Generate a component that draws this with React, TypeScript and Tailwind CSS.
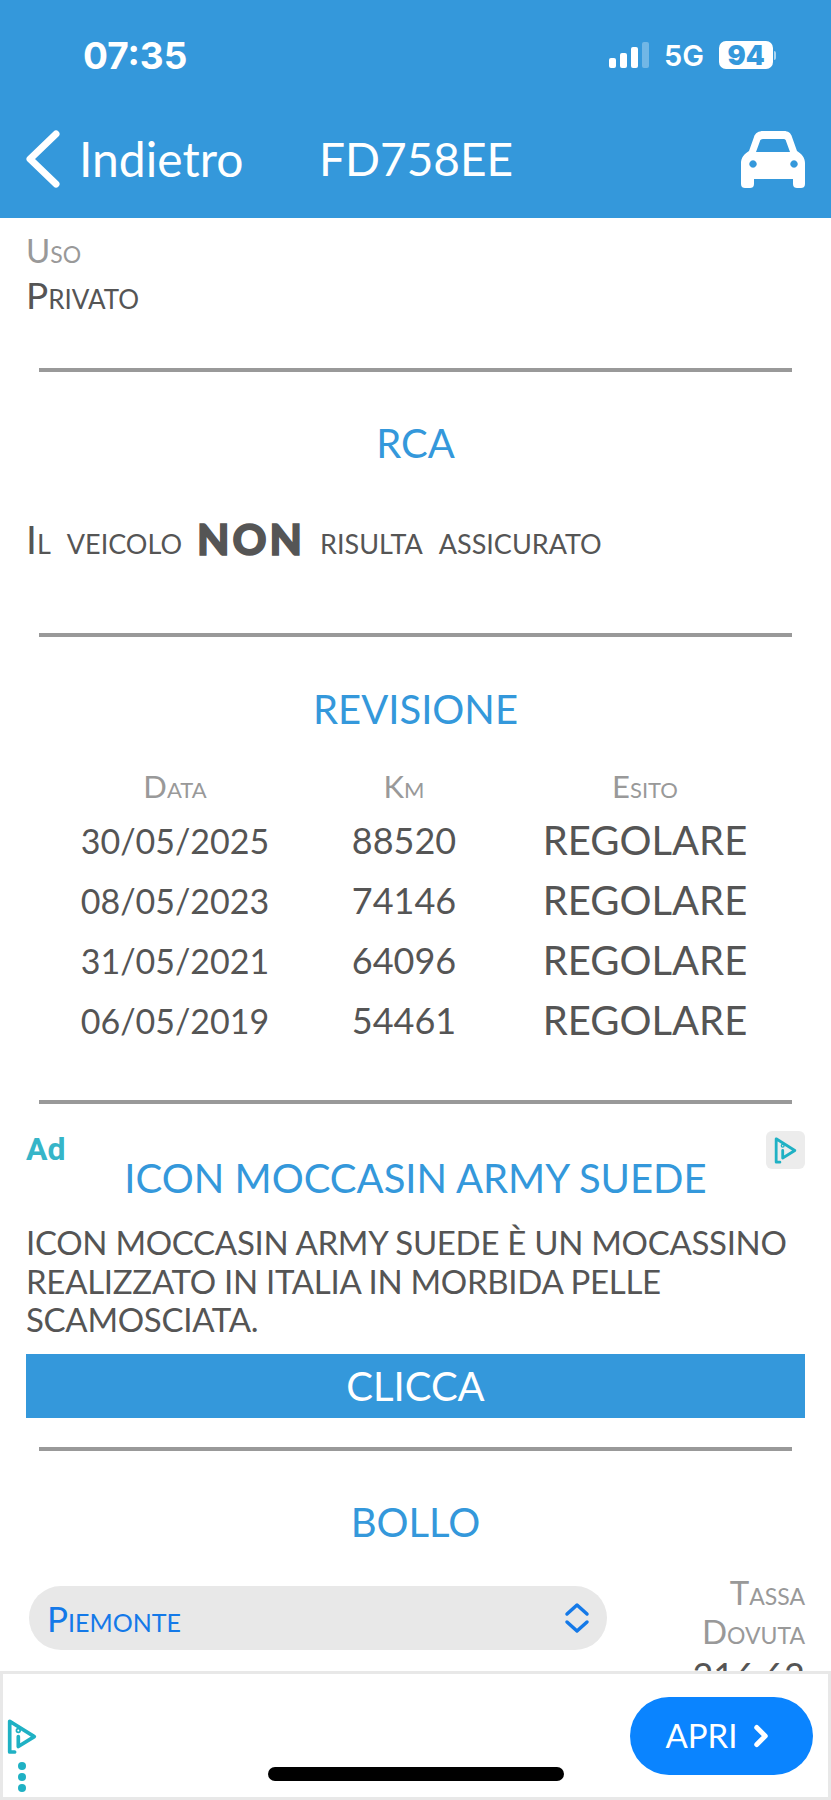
import React from 'react';
import { ChevronRight } from 'lucide-react';

const revisions = [
  { date: '30/05/2025', km: '88520', esito: 'REGOLARE' },
  { date: '08/05/2023', km: '74146', esito: 'REGOLARE' },
  { date: '31/05/2021', km: '64096', esito: 'REGOLARE' },
  { date: '06/05/2019', km: '54461', esito: 'REGOLARE' },
];

const Divider: React.FC = () => <div className="mx-[39px] h-1 bg-[#999999]" />;

const SectionTitle: React.FC<{ children: React.ReactNode }> = ({ children }) => (
  <h2 className="text-center text-[40px] leading-[44px] text-[#3498db]">{children}</h2>
);

const AdChoice: React.FC<{ className?: string }> = ({ className }) => (
  <svg viewBox="0 0 26 30" className={className} fill="none" stroke="#1fb1c4" strokeWidth="3" strokeLinejoin="round" strokeLinecap="round">
    <path d="M7 28H3V3l20 12.5-13 8v-8" />
    <circle cx="10" cy="10.5" r="0.7" />
  </svg>
);

const CarIcon: React.FC = () => (
  <svg viewBox="0 0 64 57" className="h-[57px] w-[64px]" fill="white">
    <path fillRule="evenodd" d="M22 0H43C47 0 50 2 51 6L56 20C61 23 64 27 64 32V53C64 56 62 57 60 57H56C54 57 52 56 52 53V48H13V53C13 56 11 57 9 57H4C2 57 0 56 0 53V32C0 27 3 23 8 20L13 6C14 2 18 0 22 0ZM22 8C20 8 19 9 19 10L15 21H49L45 10C45 9 44 8 43 8ZM12 29.3a3.7 3.7 0 1 0 0.01 0ZM53 29.3a3.7 3.7 0 1 0 0.01 0Z" />
  </svg>
);

const App: React.FC = () => {
  return (
    <div className="relative flex h-[1800px] w-[831px] flex-col overflow-hidden bg-white font-['Lato',sans-serif] text-[#555555]">
      <header className="h-[218px] shrink-0 bg-[#3498db] text-white">
        <div className="flex h-[110px] items-center justify-between pl-[83px] pr-[55px] font-['Inter',sans-serif]">
          <span className="text-[37px] font-bold leading-none">07:35</span>
          <div className="flex items-center">
            <div className="flex h-[26px] items-end gap-[4px]">
              <span className="h-[10px] w-[7px] rounded-[2px] bg-white" />
              <span className="h-[15px] w-[7px] rounded-[2px] bg-white" />
              <span className="h-[21px] w-[7px] rounded-[2px] bg-white" />
              <span className="h-[26px] w-[7px] rounded-[2px] bg-white/30" />
            </div>
            <span className="ml-[15px] text-[29px] font-semibold leading-none">5G</span>
            <span className="ml-[15px] flex h-[28px] w-[54px] items-center justify-center rounded-[7px] bg-white text-[27px] font-black leading-none text-[#3498db]">94</span>
            <span className="ml-[1px] h-[9px] w-[2px] rounded-r-full bg-white/60" />
          </div>
        </div>
        <nav className="flex items-center justify-between pl-[25px] pr-[26px] pt-[20px]">
          <div className="flex w-[294px] items-center">
            <svg viewBox="0 0 36 58" className="h-[58px] w-[36px] shrink-0" fill="none" stroke="white" strokeWidth="7" strokeLinecap="round" strokeLinejoin="round">
              <path d="M31 4 5 29l26 25" />
            </svg>
            <span className="ml-[18px] text-[48px] leading-none">Indietro</span>
          </div>
          <span className="flex-1 text-[46px] leading-none">FD758EE</span>
          <CarIcon />
        </nav>
      </header>

      <main className="relative min-h-0 flex-1 overflow-hidden">
        <div className="px-[26px] pt-[10px] [font-variant-caps:small-caps]">
          <div className="text-[33px] leading-[44px] text-[#999999]">Uso</div>
          <div className="text-[37px] leading-[46px]">Privato</div>
        </div>
        <div className="mt-[50px]"><Divider /></div>

        <div className="pt-[49px]"><SectionTitle>RCA</SectionTitle></div>
        <p className="mt-[51px] flex items-center px-[26px] text-[39px] leading-[46px] [font-variant-caps:small-caps] [word-spacing:6px]">
          Il veicolo
          <b className="mx-[15px] text-[42px] font-black tracking-[3px] [-webkit-text-stroke:1.5px_#555555]">NON</b>
          risulta assicurato
        </p>
        <div className="mt-[71px]"><Divider /></div>

        <div className="pt-[50px]"><SectionTitle>REVISIONE</SectionTitle></div>
        <table className="ml-[26px] mt-[32px] w-[780px] table-fixed text-center">
          <thead>
            <tr className="text-[31px] leading-[47px] text-[#999999] [font-variant-caps:small-caps]">
              <th className="w-[298px] font-normal">Data</th>
              <th className="w-[160px] font-normal">Km</th>
              <th className="font-normal">Esito</th>
            </tr>
          </thead>
          <tbody>
            {revisions.map((r) => (
              <tr key={r.date} className="h-[59.5px]">
                <td className="text-[34px]">{r.date}</td>
                <td className="text-[36px]">{r.km}</td>
                <td className="text-[40px]">{r.esito}</td>
              </tr>
            ))}
          </tbody>
        </table>
        <div className="mt-[50px]"><Divider /></div>

        <section className="relative px-[26px] pt-[52px]">
          <span className="absolute left-[26px] top-[29px] font-['Roboto',sans-serif] text-[32px] font-bold leading-none text-[#36b5c8]">Ad</span>
          <div className="absolute right-[26px] top-[27px] flex h-[38px] w-[39px] items-center justify-center rounded-[6px] bg-[#ececec]">
            <AdChoice className="h-[28px] w-[25px]" />
          </div>
          <SectionTitle>ICON MOCCASIN ARMY SUEDE</SectionTitle>
          <p className="mt-[23px] text-[33px] leading-[38.5px] tracking-[-0.3px]">
            ICON MOCCASIN ARMY SUEDE È UN MOCASSINO REALIZZATO IN ITALIA IN MORBIDA PELLE SCAMOSCIATA.
          </p>
          <button className="mt-[15px] h-[64px] w-full bg-[#3498db] text-[40px] text-white">CLICCA</button>
        </section>
        <div className="mt-[29px]"><Divider /></div>

        <div className="pt-[49px]"><SectionTitle>BOLLO</SectionTitle></div>
        <div className="mt-[34px] flex items-start justify-between pl-[29px] pr-[26px]">
          <div className="mt-[8px] flex h-[64px] w-[578px] items-center justify-between rounded-full bg-[#e8e8e8] pl-[18px] pr-[16px] text-[#1479e8]">
            <span className="pt-[2px] text-[35px] leading-none [font-variant-caps:small-caps]">Piemonte</span>
            <svg viewBox="0 0 28 32" className="h-[32px] w-[28px]" fill="none" stroke="currentColor" strokeWidth="3.5" strokeLinecap="round" strokeLinejoin="round">
              <path d="M4 12 14 3l10 9M4 20l10 9 10-9" />
            </svg>
          </div>
          <div className="-mt-[5px] text-right">
            <div className="text-[33px] leading-[39px] text-[#999999] [font-variant-caps:small-caps]">Tassa<br />Dovuta</div>
            <div className="mt-[2px] text-[36px] leading-[44px]">216,62</div>
          </div>
        </div>
      </main>

      <footer className="relative flex h-[129px] shrink-0 items-center justify-end border-[3px] border-[#e8e8e8] bg-white pr-[15px]">
        <div className="absolute bottom-[5px] left-[3px] flex flex-col items-center">
          <AdChoice className="h-[38px] w-[32px]" />
          <div className="mt-[7px] flex flex-col gap-[3px]">
            <span className="h-[8px] w-[8px] rounded-full bg-[#1fb1c4]" />
            <span className="h-[8px] w-[8px] rounded-full bg-[#1fb1c4]" />
            <span className="h-[8px] w-[8px] rounded-full bg-[#1fb1c4]" />
          </div>
        </div>
        <button className="flex h-[78px] w-[183px] items-center justify-center rounded-full bg-[#0a84ff] text-[33px] text-white">
          APRI
          <ChevronRight size={34} strokeWidth={3.5} className="ml-[6px]" />
        </button>
        <div className="absolute bottom-[16px] left-[265px] h-[14px] w-[296px] rounded-full bg-black" />
      </footer>
    </div>
  );
};

export default App;
